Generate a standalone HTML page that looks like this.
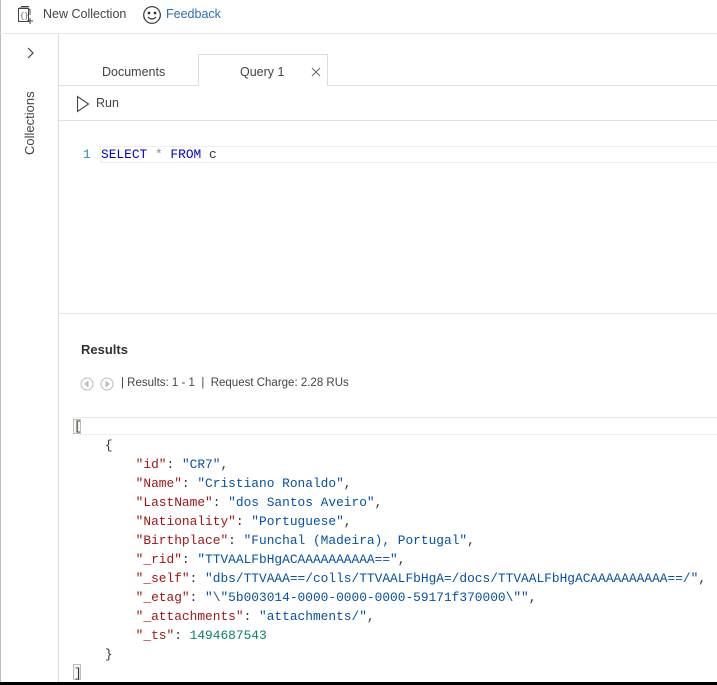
<!DOCTYPE html>
<html><head><meta charset="utf-8"><style>
*{margin:0;padding:0;box-sizing:border-box}
body{width:717px;height:685px;overflow:hidden;background:#fff;font-family:"Liberation Sans",sans-serif;color:#333;position:relative}
.abs{position:absolute}
.mono{font-family:"Liberation Mono",monospace;font-size:12.85px;white-space:pre}
.k{color:#a31515}.s{color:#0451a5}.n{color:#098658}.p{color:#333}
</style></head><body>
<div class="abs" style="left:0;top:0;width:1px;height:685px;background:#bbb"></div>
<div class="abs" style="left:0;top:33px;width:717px;height:1px;background:#e6e6e6"></div>
<svg class="abs" style="left:16px;top:5px" width="20" height="20" viewBox="0 0 20 20" fill="none" stroke="#444" stroke-width="1">
<path d="M3 3h9l2 2v5"/><path d="M5 1.5h8"/><rect x="2.5" y="3.5" width="10" height="13"/><text x="4" y="13" font-size="7" fill="#444" stroke="none" font-family="Liberation Mono">{}</text><path d="M14 13v6M11 16h6"/></svg>
<div class="abs" style="left:43px;top:7px;font-size:12.5px;color:#444">New Collection</div>
<svg class="abs" style="left:142px;top:5px" width="20" height="20" viewBox="0 0 20 20" fill="none" stroke="#333" stroke-width="1.2"><circle cx="10" cy="10" r="8.3"/><circle cx="7" cy="8" r=".8" fill="#333"/><circle cx="13" cy="8" r=".8" fill="#333"/><path d="M6 12q4 4 8 0"/></svg>
<div class="abs" style="left:166px;top:7px;font-size:12.5px;color:#2c6fad">Feedback</div>
<div class="abs" style="left:58px;top:34px;width:1px;height:650px;background:#ddd"></div>
<svg class="abs" style="left:25px;top:46px" width="10" height="14" viewBox="0 0 10 14" fill="none" stroke="#444" stroke-width="1.2"><path d="M3 2l5 5-5 5"/></svg>
<div class="abs" style="left:22px;top:155px;transform:rotate(-90deg);transform-origin:0 0;font-size:13px;color:#444;white-space:nowrap">Collections</div>
<div class="abs" style="left:59px;top:85px;width:658px;height:1px;background:#e0e0e0"></div>
<div class="abs" style="left:102px;top:65px;font-size:12.5px;color:#444">Documents</div>
<div class="abs" style="left:198px;top:54px;width:130px;height:32px;background:#fff;border:1px solid #ddd;border-bottom:none"></div>
<div class="abs" style="left:240px;top:65px;font-size:12.5px;color:#444">Query 1</div>
<svg class="abs" style="left:311px;top:67px" width="10" height="10" viewBox="0 0 10 10" stroke="#666" stroke-width="1"><path d="M1 1l8 8M9 1l-8 8"/></svg>
<svg class="abs" style="left:76px;top:95px" width="14" height="18" viewBox="0 0 14 18" fill="none" stroke="#444" stroke-width="1.1"><path d="M1.5 1.5v15l11-7.5z"/></svg>
<div class="abs" style="left:96px;top:96px;font-size:12.5px;color:#444">Run</div>
<div class="abs" style="left:59px;top:120px;width:658px;height:1px;background:#e0e0e0"></div>
<div class="abs" style="left:100px;top:146px;width:617px;height:17px;border:1px solid #eee;border-right:none"></div>
<div class="abs mono" style="left:83px;top:147px;color:#2b91af">1</div>
<div class="abs mono" style="left:101px;top:147px"><span style="color:#00c">SELECT</span> <span style="color:#888">*</span> <span style="color:#00c">FROM</span> <span style="color:#333">c</span></div>
<div class="abs" style="left:59px;top:313px;width:658px;height:1px;background:#e6e6e6"></div>
<div class="abs" style="left:81px;top:342px;font-size:13px;font-weight:bold;color:#333">Results</div>
<svg class="abs" style="left:80px;top:377px" width="36" height="14" viewBox="0 0 36 14" fill="none" stroke="#bbb"><circle cx="7" cy="7" r="6"/><path d="M8 4.5l-3 2.5 3 2.5z" fill="#bbb"/><circle cx="27" cy="7" r="6"/><path d="M26 4.5l3 2.5-3 2.5z" fill="#bbb"/></svg>
<div class="abs" style="left:121px;top:377px;font-size:11.5px;color:#444">| Results: 1 - 1 &nbsp;| &nbsp;Request Charge: 2.28 RUs</div>
<div class="abs" style="left:73px;top:417px;width:644px;height:1px;background:#e6e6e6"></div>
<div class="abs" style="left:80px;top:434px;width:637px;height:1px;background:#eee"></div>
<div class="abs" style="left:73px;top:419px;width:8px;height:15px;border:1px solid #bbb;background:#f4f8e8"></div>
<div class="abs" style="left:73px;top:664px;width:8px;height:16px;border:1px solid #bbb;background:#f6f6f6"></div>
<div class="abs mono" style="left:74px;top:417px;line-height:19px"><span class="p">[
    {
        <span class="k">"id"</span>: <span class="s">"CR7"</span>,
        <span class="k">"Name"</span>: <span class="s">"Cristiano Ronaldo"</span>,
        <span class="k">"LastName"</span>: <span class="s">"dos Santos Aveiro"</span>,
        <span class="k">"Nationality"</span>: <span class="s">"Portuguese"</span>,
        <span class="k">"Birthplace"</span>: <span class="s">"Funchal (Madeira), Portugal"</span>,
        <span class="k">"_rid"</span>: <span class="s">"TTVAALFbHgACAAAAAAAAAA=="</span>,
        <span class="k">"_self"</span>: <span class="s">"dbs/TTVAAA==/colls/TTVAALFbHgA=/docs/TTVAALFbHgACAAAAAAAAAA==/"</span>,
        <span class="k">"_etag"</span>: <span class="s">"\"5b003014-0000-0000-0000-59171f370000\""</span>,
        <span class="k">"_attachments"</span>: <span class="s">"attachments/"</span>,
        <span class="k">"_ts"</span>: <span class="n">1494687543</span>
    }
]</span></div>
<div class="abs" style="left:0;top:682px;width:717px;height:3px;background:#000"></div>
</body></html>
